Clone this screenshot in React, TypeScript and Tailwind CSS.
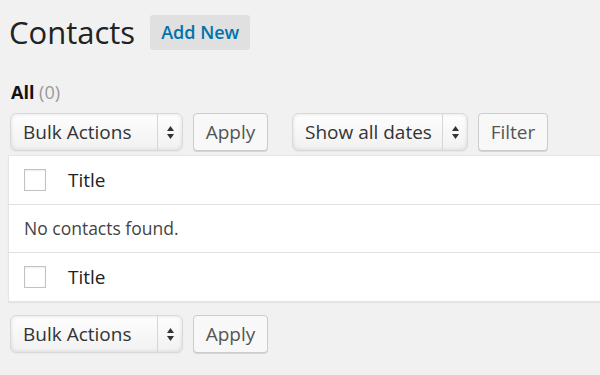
import React from "react";

function SelectBox({ label, width }: { label: string; width: string }) {
  return (
    <div
      className={`${width} h-[38px] flex items-stretch rounded-[6px] border border-[#d9d9d9] bg-gradient-to-b from-[#fefefe] to-[#f1f1f1] shadow-[inset_0_0_4px_rgba(0,0,0,0.12),0_1px_1px_rgba(0,0,0,0.04)]`}
    >
      <div className="flex-1 flex items-center pl-[12px] text-[19px] leading-[38px] text-[#333] whitespace-nowrap">
        {label}
      </div>
      <div className="w-[25px] border-l border-[#d6d6d6] flex flex-col items-center justify-center gap-[3px]">
        <svg width="7" height="5" viewBox="0 0 7 5">
          <path d="M3.5 0 L7 5 L0 5 Z" fill="#333" />
        </svg>
        <svg width="7" height="5" viewBox="0 0 7 5">
          <path d="M0 0 L7 0 L3.5 5 Z" fill="#333" />
        </svg>
      </div>
    </div>
  );
}

function Button({ label, width }: { label: string; width: string }) {
  return (
    <div
      className={`${width} h-[38px] flex items-center justify-center rounded-[4px] border border-[#cccccc] bg-[#f8f8f8] shadow-[0_1px_0_#d4d4d4] text-[19px] text-[#555]`}
    >
      {label}
    </div>
  );
}

function Checkbox() {
  return (
    <div className="w-[22px] h-[22px] border border-[#c2c2c2] bg-white shadow-[inset_0_1px_2px_rgba(0,0,0,0.08)]" />
  );
}

export default function App() {
  return (
    <div
      className="w-[600px] h-[375px] overflow-hidden bg-[#f1f1f1]"
      style={{ fontFamily: '"Open Sans", "Liberation Sans", sans-serif' }}
    >
      <div className="flex items-center pt-[15px] pl-[9px]">
        <h1 className="text-[31px] leading-[35px] font-normal text-[#222]">
          Contacts
        </h1>
        <div className="ml-[15px] h-[35px] px-[11px] flex items-center rounded-[3px] bg-[#e0e0e0] text-[18px] font-semibold text-[#0073aa]">
          Add New
        </div>
      </div>

      <div className="mt-[30px] pl-[11px] text-[18px] leading-[24px]">
        <span className="font-bold text-[#111]">All</span>{" "}
        <span className="text-[#999]">(0)</span>
      </div>

      <div className="mt-[9px] pl-[10px] flex items-center">
        <SelectBox label="Bulk Actions" width="w-[173px]" />
        <div className="ml-[10px]">
          <Button label="Apply" width="w-[75px]" />
        </div>
        <div className="ml-[24px]">
          <SelectBox label="Show all dates" width="w-[176px]" />
        </div>
        <div className="ml-[10px]">
          <Button label="Filter" width="w-[70px]" />
        </div>
      </div>

      <div className="mt-[4px] ml-[8px] w-[620px] bg-white border border-[#e5e5e5] shadow-[0_1px_1px_rgba(0,0,0,0.05)]">
        <div className="h-[49px] flex items-center pl-[15px] border-b border-[#e1e1e1]">
          <Checkbox />
          <span className="ml-[22px] text-[19px] text-[#222]">Title</span>
        </div>
        <div className="h-[48px] flex items-center pl-[15px] border-b border-[#e1e1e1] text-[17.5px] text-[#444]">
          No contacts found.
        </div>
        <div className="h-[48px] flex items-center pl-[15px]">
          <Checkbox />
          <span className="ml-[22px] text-[19px] text-[#222]">Title</span>
        </div>
      </div>

      <div className="mt-[13px] pl-[10px] flex items-center">
        <SelectBox label="Bulk Actions" width="w-[173px]" />
        <div className="ml-[10px]">
          <Button label="Apply" width="w-[75px]" />
        </div>
      </div>
    </div>
  );
}
